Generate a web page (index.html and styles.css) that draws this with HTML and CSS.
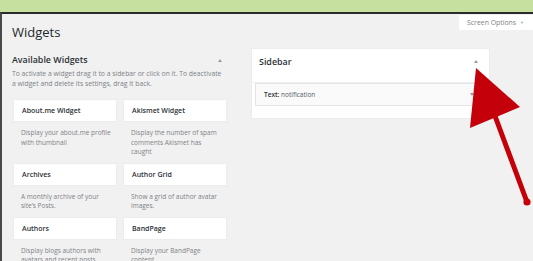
FILE: index.html
```html
<!DOCTYPE html>
<html>
<head>
  <title>Widgets</title>
  <meta charset="UTF-8">
  <link rel="stylesheet" href="styles.css">
</head>
<body>
  <div class="topband"></div>
  <div class="frame">
    <div class="head-row">
      <h1 class="page-title">Widgets</h1>
      <div class="screen-options">Screen Options <span class="so-arrow">&#9660;</span></div>
    </div>
    <div class="columns">
      <div class="available">
        <div class="section-head">
          <h2 class="section-title">Available Widgets</h2>
          <span class="toggle-up"></span>
        </div>
        <p class="section-desc">To activate a widget drag it to a sidebar or click on it. To deactivate<br>a widget and delete its settings, drag it back.</p>
        <div class="widget-list">
          <div class="widget">
            <div class="widget-title">About.me Widget</div>
            <div class="widget-desc">Display your about.me profile with thumbnail</div>
          </div>
          <div class="widget">
            <div class="widget-title">Akismet Widget</div>
            <div class="widget-desc">Display the number of spam comments Akismet has caught</div>
          </div>
          <div class="widget">
            <div class="widget-title">Archives</div>
            <div class="widget-desc">A monthly archive of your site’s Posts.</div>
          </div>
          <div class="widget">
            <div class="widget-title">Author Grid</div>
            <div class="widget-desc">Show a grid of author avatar images.</div>
          </div>
          <div class="widget">
            <div class="widget-title">Authors</div>
            <div class="widget-desc">Display blogs authors with avatars and recent posts.</div>
          </div>
          <div class="widget">
            <div class="widget-title">BandPage</div>
            <div class="widget-desc">Display your BandPage content.</div>
          </div>
        </div>
      </div>
      <div class="sidebars">
        <div class="sidebar-panel">
          <div class="panel-head">
            <h2 class="section-title">Sidebar</h2>
            <span class="toggle-up"></span>
          </div>
          <div class="panel-body">
            <div class="placed-widget">
              <span><b>Text:</b> notification</span>
              <span class="toggle-down"></span>
            </div>
          </div>
        </div>
      </div>
    </div>
  </div>

  <svg class="pointer" width="533" height="261" viewBox="0 0 533 261">
    <line x1="495" y1="116" x2="527" y2="202" stroke="#c4000a" stroke-width="5" stroke-linecap="round"/>
    <circle cx="527" cy="202" r="3.6" fill="#c4000a"/>
    <polygon points="476,68 520,107 470,128" fill="#c4000a"/>
  </svg>
</body>
</html>
```

FILE: styles.css
```css
body {
  margin: 0;
  width: 533px;
  height: 261px;
  overflow: hidden;
  background-color: #c6e0a0;
  font-family: "Open Sans", "Liberation Sans", sans-serif;
  color: #23282d;
}

.topband {
  height: 12px;
}

.frame {
  height: 249px;
  overflow: hidden;
  border-top: 2px solid #2b2b2b;
  border-left: 2px solid #4a4a4a;
  background-color: #f1f1f1;
  padding-left: 10px;
  box-sizing: border-box;
}

.head-row {
  display: flex;
  justify-content: space-between;
  align-items: flex-start;
}

.page-title {
  margin: 10px 0 0 0;
  font-size: 13px;
  line-height: 16px;
  font-weight: 400;
}

.screen-options {
  margin-top: 1px;
  width: 74px;
  height: 15px;
  box-sizing: border-box;
  padding-left: 8px;
  background-color: #fff;
  color: #7d8287;
  font-size: 6.9px;
  line-height: 15px;
}

.so-arrow {
  font-size: 4px;
  color: #a0a5aa;
  margin-left: 2px;
  vertical-align: 1px;
}

.columns {
  display: flex;
  gap: 20px;
  margin-top: 8px;
}

.available {
  width: 219px;
  padding-top: 6px;
}

.section-head {
  display: flex;
  justify-content: space-between;
  align-items: center;
  padding-right: 9px;
}

.section-title {
  margin: 0;
  font-size: 8.9px;
  line-height: 12px;
  font-weight: 600;
  color: #2c3136;
}

.toggle-up {
  width: 0;
  height: 0;
  border-left: 2.5px solid transparent;
  border-right: 2.5px solid transparent;
  border-bottom: 3px solid #9a9a9a;
}

.toggle-down {
  width: 0;
  height: 0;
  border-left: 2.5px solid transparent;
  border-right: 2.5px solid transparent;
  border-top: 3px solid #9a9a9a;
}

.section-desc {
  margin: 3px 0 0 0;
  font-size: 6.8px;
  line-height: 10px;
  white-space: nowrap;
  color: #7d8287;
}

.widget-list {
  display: grid;
  grid-template-columns: 104px 104px;
  column-gap: 6px;
  row-gap: 6px;
  margin-top: 10px;
  margin-left: 1px;
}

.widget-title {
  height: 23px;
  box-sizing: border-box;
  padding-left: 8px;
  background-color: #fff;
  border: 1px solid #ececec;
  font-size: 7px;
  line-height: 21px;
  font-weight: 600;
  color: #2c3136;
}

.widget-desc {
  margin-top: 6px;
  padding-left: 8px;
  padding-right: 6px;
  font-size: 6.5px;
  line-height: 9.5px;
  color: #7d8287;
}

.sidebars {
  width: 239px;
}

.sidebar-panel {
  background-color: #fff;
  border: 1px solid #ececec;
  padding-bottom: 12px;
}

.panel-head {
  display: flex;
  justify-content: space-between;
  align-items: center;
  height: 34px;
  box-sizing: border-box;
  padding: 0 11px 8px 7px;
  border-bottom: 1px solid #eeeeee;
}

.panel-body {
  padding: 0 3px;
}

.placed-widget {
  display: flex;
  justify-content: space-between;
  align-items: center;
  height: 23px;
  box-sizing: border-box;
  padding: 0 11px 0 8px;
  background-color: #fafafa;
  border: 1px solid #e5e5e5;
  font-size: 6.5px;
  color: #555a5f;
}

.placed-widget b {
  font-weight: 600;
  color: #2c3136;
}

.pointer {
  position: absolute;
  left: 0;
  top: 0;
  pointer-events: none;
}
```
